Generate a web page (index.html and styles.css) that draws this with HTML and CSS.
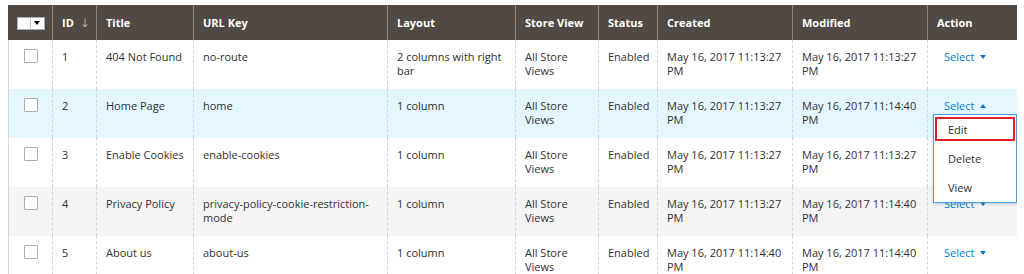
FILE: index.html
```html
<!DOCTYPE html>
<html>
<head>
<meta charset="utf-8">
<link rel="stylesheet" href="styles.css">
</head>
<body>
<table class="grid">
  <colgroup>
    <col class="c-check"><col class="c-id"><col class="c-title"><col class="c-url"><col class="c-layout"><col class="c-store"><col class="c-status"><col class="c-created"><col class="c-modified"><col class="c-action">
  </colgroup>
  <thead>
    <tr>
      <th class="th-check"><span class="multi"><span class="multi-box"></span><span class="multi-drop"><span class="tri-down-black"></span></span></span></th>
      <th>ID <span class="sort">↓</span></th>
      <th>Title</th>
      <th>URL Key</th>
      <th>Layout</th>
      <th>Store View</th>
      <th>Status</th>
      <th>Created</th>
      <th>Modified</th>
      <th>Action</th>
    </tr>
  </thead>
  <tbody>
    <tr>
      <td class="td-check"><span class="cb"></span></td>
      <td>1</td>
      <td>404 Not Found</td>
      <td>no-route</td>
      <td>2 columns with right bar</td>
      <td>All Store Views</td>
      <td>Enabled</td>
      <td>May 16, 2017 11:13:27 PM</td>
      <td>May 16, 2017 11:13:27 PM</td>
      <td class="td-action"><span class="select">Select <span class="tri-down"></span></span></td>
    </tr>
    <tr class="active">
      <td class="td-check"><span class="cb"></span></td>
      <td>2</td>
      <td>Home Page</td>
      <td>home</td>
      <td>1 column</td>
      <td>All Store Views</td>
      <td>Enabled</td>
      <td>May 16, 2017 11:13:27 PM</td>
      <td>May 16, 2017 11:14:40 PM</td>
      <td class="td-action">
        <div class="action-wrap">
          <span class="select">Select <span class="tri-up"></span></span>
          <ul class="menu">
            <li class="menu-item menu-item-marked">Edit</li>
            <li class="menu-item">Delete</li>
            <li class="menu-item">View</li>
          </ul>
        </div>
      </td>
    </tr>
    <tr>
      <td class="td-check"><span class="cb"></span></td>
      <td>3</td>
      <td>Enable Cookies</td>
      <td>enable-cookies</td>
      <td>1 column</td>
      <td>All Store Views</td>
      <td>Enabled</td>
      <td>May 16, 2017 11:13:27 PM</td>
      <td>May 16, 2017 11:13:27 PM</td>
      <td class="td-action"><span class="select">Select <span class="tri-down"></span></span></td>
    </tr>
    <tr class="alt">
      <td class="td-check"><span class="cb"></span></td>
      <td>4</td>
      <td>Privacy Policy</td>
      <td>privacy-policy-cookie-restriction-mode</td>
      <td>1 column</td>
      <td>All Store Views</td>
      <td>Enabled</td>
      <td>May 16, 2017 11:13:27 PM</td>
      <td>May 16, 2017 11:14:40 PM</td>
      <td class="td-action"><span class="select">Select <span class="tri-down"></span></span></td>
    </tr>
    <tr>
      <td class="td-check"><span class="cb"></span></td>
      <td>5</td>
      <td>About us</td>
      <td>about-us</td>
      <td>1 column</td>
      <td>All Store Views</td>
      <td>Enabled</td>
      <td>May 16, 2017 11:14:40 PM</td>
      <td>May 16, 2017 11:14:40 PM</td>
      <td class="td-action"><span class="select">Select <span class="tri-down"></span></span></td>
    </tr>
  </tbody>
</table>
</body>
</html>
```

FILE: styles.css
```css
html, body {
  background: #ffffff;
}
body {
  margin: 5px 7px 0 8px;
  font-family: "Open Sans", "Liberation Sans", sans-serif;
  font-size: 11px;
  color: #303030;
  overflow: hidden;
}
.grid {
  width: 1009px;
  border-collapse: collapse;
  table-layout: fixed;
}
.c-check { width: 44px; }
.c-id { width: 44px; }
.c-title { width: 97px; }
.c-url { width: 194px; }
.c-layout { width: 128px; }
.c-store { width: 83px; }
.c-status { width: 59px; }
.c-created { width: 135px; }
.c-modified { width: 135px; }
.c-action { width: 90px; }

.grid th {
  background: #514943;
  color: #ffffff;
  font-weight: 700;
  text-align: left;
  height: 35px;
  padding: 0 4px 0 9px;
  border-left: 1px solid #8a837f;
  border-right: 1px solid #8a837f;
  vertical-align: middle;
  line-height: 14px;
  white-space: nowrap;
  box-sizing: border-box;
}
.grid th:first-child { border-left-color: #514943; }
.grid th:last-child { border-right-color: #514943; }
.sort {
  font-family: "DejaVu Sans", sans-serif;
  font-weight: 300;
  font-size: 12px;
  margin-left: 3px;
  color: #d8d3cf;
}
.th-check {
  padding: 0 !important;
  text-align: center !important;
}
.multi {
  display: inline-flex;
  vertical-align: middle;
  height: 11px;
  background: #ffffff;
  border: 1px solid #adadad;
}
.multi-box {
  width: 12px;
  height: 11px;
  border-right: 1px solid #c2c2c2;
}
.multi-drop {
  width: 13px;
  height: 11px;
  display: flex;
  align-items: center;
  justify-content: center;
}
.tri-down-black {
  width: 0;
  height: 0;
  border-left: 3.5px solid transparent;
  border-right: 3.5px solid transparent;
  border-top: 4px solid #000000;
}

.grid td {
  padding: 10px 4px 11px 9px;
  line-height: 14px;
  vertical-align: top;
  border-left: 1px dashed #d6d6d6;
  border-right: 1px dashed #d6d6d6;
  height: 28px;
}
.grid td:first-child { border-left: 1px solid #d6d6d6; }
.grid td:last-child { border-right: 1px solid #d6d6d6; }
.grid tr.active td { background: #e5f7fe; }
.grid tr.alt td { background: #f5f5f5; }

.td-check {
  text-align: center;
  padding-top: 9px !important;
  padding-left: 0 !important;
  padding-right: 0 !important;
}
.cb {
  display: inline-block;
  width: 12px;
  height: 12px;
  border: 1px solid #adadad;
  border-radius: 1px;
  background: #ffffff;
  vertical-align: top;
}
.td-action {
  padding-left: 16px !important;
}
.action-wrap {
  position: relative;
}
.select {
  color: #007bdb;
  white-space: nowrap;
}
.tri-down, .tri-up {
  display: inline-block;
  width: 0;
  height: 0;
  margin-left: 3px;
  vertical-align: middle;
  border-left: 3.5px solid transparent;
  border-right: 3.5px solid transparent;
  position: relative;
  top: -1px;
}
.tri-down { border-top: 4px solid #007bdb; }
.tri-up { border-bottom: 4px solid #007bdb; }

.menu {
  position: absolute;
  top: 15px;
  left: -11px;
  width: 82px;
  margin: 0;
  padding: 2px 0 3px;
  list-style: none;
  background: #ffffff;
  border: 1px solid #4a9ee3;
  box-shadow: 0 1px 3px rgba(0, 0, 0, 0.2);
  z-index: 2;
}
.menu-item {
  height: 24px;
  line-height: 22px;
  padding: 0 11px;
  margin: 0 1px 5px;
  color: #303030;
  box-sizing: border-box;
  border: 2px solid transparent;
}
.menu-item:last-child { margin-bottom: 0; }
.menu-item-marked {
  border-color: #e41d1d;
}
```
